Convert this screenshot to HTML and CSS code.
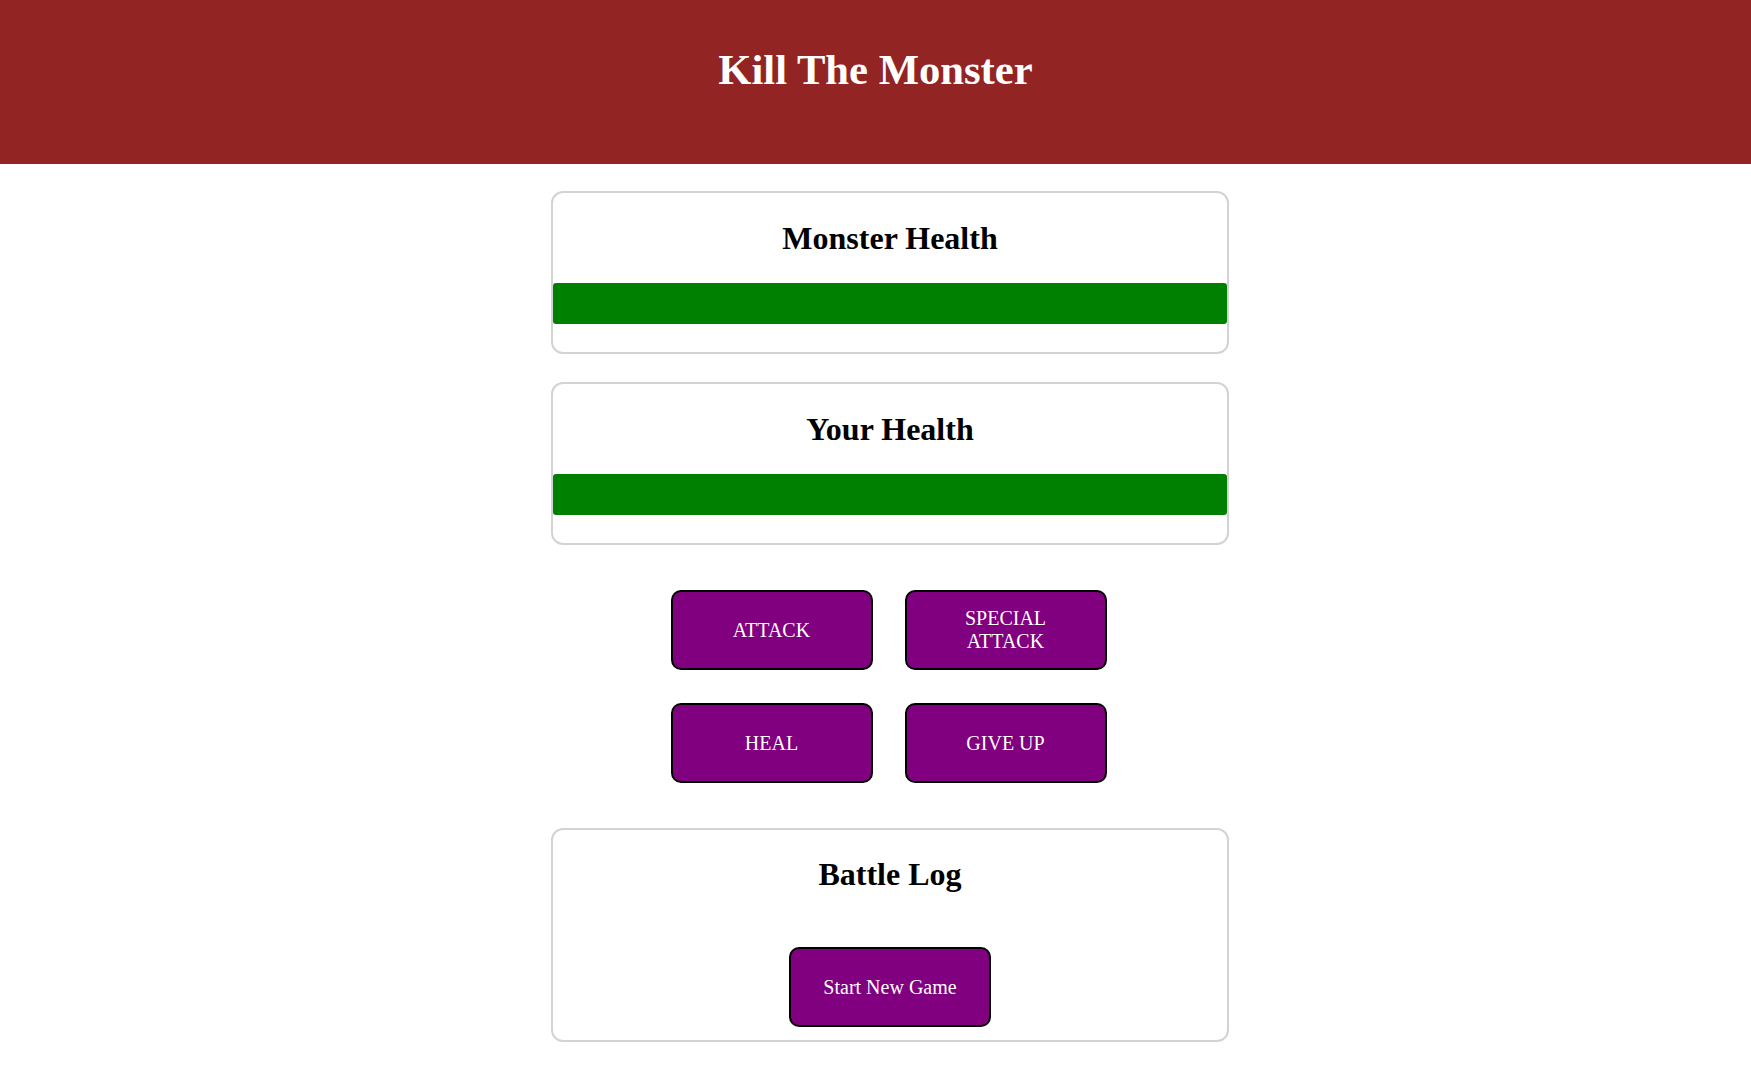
FILE: index.html
```html
<!DOCTYPE html>
<html lang="en">
<head>
<meta charset="utf-8">
<title>Kill The Monster</title>
<link rel="stylesheet" href="styles.css">
</head>
<body>
<header class="site-header">
  <h1 class="title">Kill The Monster</h1>
</header>
<main class="game">
  <div class="health-group">
    <section class="card">
      <h2 class="card-title">Monster Health</h2>
      <div class="healthbar"><div class="healthbar-value" style="width: 100%"></div></div>
    </section>
    <section class="card">
      <h2 class="card-title">Your Health</h2>
      <div class="healthbar"><div class="healthbar-value" style="width: 100%"></div></div>
    </section>
  </div>
  <section class="controls">
    <button class="btn">ATTACK</button>
    <button class="btn">SPECIAL ATTACK</button>
    <button class="btn">HEAL</button>
    <button class="btn">GIVE UP</button>
  </section>
  <section class="card log">
    <h2 class="card-title">Battle Log</h2>
    <button class="btn">Start New Game</button>
  </section>
</main>
</body>
</html>
```

FILE: styles.css
```css
* {
  box-sizing: border-box;
}

body {
  margin: 0;
  font-family: "Liberation Serif", "Times New Roman", serif;
  background: #ffffff;
  color: #000000;
}

.site-header {
  height: 164px;
  padding-top: 16px;
  background-color: #932424;
  color: #ffffff;
  text-align: center;
}

.title {
  margin: 28.5px 0;
  font-size: 42.67px;
  font-weight: bold;
}

.game {
  display: flex;
  flex-direction: column;
  align-items: center;
  gap: 46px;
  padding: 27px 0 40px 29px;
}

.health-group {
  display: flex;
  flex-direction: column;
  gap: 28px;
}

.card {
  width: 678px;
  border: 2px solid #d3d3d3;
  border-radius: 12px;
  text-align: center;
  background: #ffffff;
}

.card-title {
  margin: 26.5px 0;
  font-size: 32px;
  font-weight: bold;
}

.healthbar {
  height: 41px;
  margin-bottom: 28px;
}

.healthbar-value {
  height: 100%;
  background-color: #008000;
  border-radius: 3px;
}

.controls {
  display: grid;
  grid-template-columns: 202px 202px;
  column-gap: 32px;
  row-gap: 33px;
  margin-right: 3px;
  margin-top: -1px;
  margin-bottom: -1.5px;
}

.btn {
  width: 202px;
  height: 80px;
  padding: 0 30px;
  border: 2px solid #000000;
  border-radius: 10px;
  background-color: #800080;
  color: #ffffff;
  font-family: "Liberation Serif", "Times New Roman", serif;
  font-size: 20px;
  line-height: 1.15;
  cursor: pointer;
}

.log {
  padding-bottom: 13px;
}

.log .card-title {
  margin-bottom: 27px;
}

.log .btn {
  margin-top: 27px;
}
```
